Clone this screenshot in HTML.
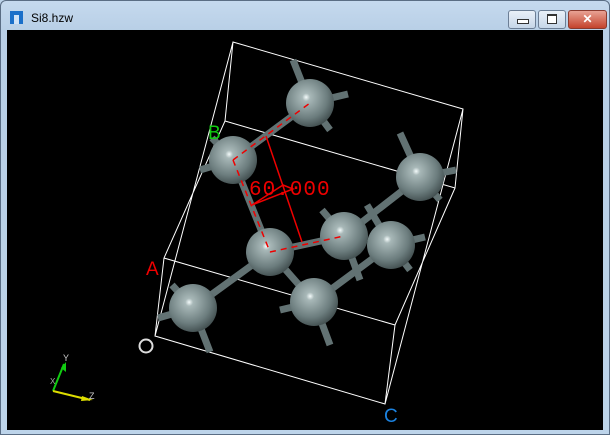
<!DOCTYPE html>
<html><head><style>
html,body{margin:0;padding:0;width:610px;height:434px;overflow:hidden;background:#bcd3ea;font-family:"Liberation Sans",sans-serif}
.win{position:absolute;left:0;top:0;width:608px;height:433px;border:1px solid #5a6d84;border-radius:6px 6px 0 0;background:linear-gradient(#c5d9ee,#b8cfe6 30px,#bdd4ea)}
.title{position:absolute;left:30px;top:10px;font-size:12px;color:#000}
.icon{position:absolute;left:9px;top:10px;width:13px;height:13px;background:#1a6fc9}
.icon:after{content:"";position:absolute;left:4px;top:4px;width:5px;height:9px;background:#cfe2f7}
.btn{position:absolute;top:9px;height:17px;border:1px solid #6c7e95;border-radius:3px;background:linear-gradient(#e9f0f8,#c6d6e8)}
</style></head><body>
<div class="win">
<div class="icon"></div><div class="title">Si8.hzw</div>
<div class="btn" style="left:507px;width:26px"><div style="position:absolute;left:8px;top:8px;width:10px;height:3px;border:1px solid #333;background:#fff"></div></div>
<div class="btn" style="left:537px;width:26px"><div style="position:absolute;left:8px;top:3px;width:8px;height:7px;border:1px solid #333;border-top-width:2px;background:#fff"></div></div>
<div class="btn" style="left:567px;width:37px;background:linear-gradient(#e8a294,#c4432c);border-color:#8a3a2e;color:#fff;font-weight:bold;font-size:12px;text-align:center;line-height:17px">✕</div>
</div>
<svg style="position:absolute;left:0;top:0" width="610" height="434">
<defs><radialGradient id="g" cx="0.42" cy="0.38" r="0.68"><stop offset="0" stop-color="#f4fbfb"/><stop offset="0.12" stop-color="#a8b8b8"/><stop offset="0.65" stop-color="#6c7d7e"/><stop offset="1" stop-color="#3a4647"/></radialGradient></defs>
<rect x="7" y="30" width="596" height="400" fill="#000"/>
<g stroke="#fff" stroke-width="1" fill="none">
<path d="M233 42L463 109L455 188L225 121ZM233 42L155 336L385 404L463 109M225 121L164 258L395 325L455 188M155 336L164 258M385 404L395 325"/>
</g>
<g stroke="#627273" stroke-width="7" stroke-linecap="butt">
<path d="M233 160L310 103M233 160L270 252M270 252L344 236M270 252L193 308M270 252L314 302M314 302L391 245M344 236L420 177M310 103L293 60M310 103L348 94M310 103L330 130M233 160L212 138M233 160L200 170M193 308L172 285M193 308L158 318M193 308L210 352M314 302L280 310M314 302L330 345M344 236L322 210M391 245L367 205M391 245L425 237M391 245L410 270M420 177L400 133M420 177L456 170M420 177L440 200M344 236L360 280"/>
</g>
<g fill="url(#g)">
<circle cx="310" cy="103" r="24"/><circle cx="233" cy="160" r="24"/><circle cx="420" cy="177" r="24"/>
<circle cx="391" cy="245" r="24"/><circle cx="344" cy="236" r="24"/><circle cx="270" cy="252" r="24"/>
<circle cx="314" cy="302" r="24"/><circle cx="193" cy="308" r="24"/>
</g>
<g stroke="#e00" stroke-width="1.5" fill="none">
<path d="M233 160L310 103" stroke-dasharray="6 5"/><path d="M233 160L270 252" stroke-dasharray="6 5"/><path d="M270 252L344 236" stroke-dasharray="6 5"/>
<path d="M266 136L302 242M252 205L293 189L283 185L252 205"/>
</g>
<text x="249" y="195" fill="#e00" font-size="21" font-family="Liberation Mono,monospace" letter-spacing="1">60.000</text>
<text x="146" y="275" fill="#e00" font-size="19">A</text>
<text x="208" y="139" fill="#1c1" font-size="19">B</text>
<text x="384" y="422" fill="#1b82e0" font-size="19">C</text>
<circle cx="146" cy="346" r="6.5" stroke="#ddd" stroke-width="2" fill="none"/>
<path d="M53 391L64 364" stroke="#1c1" stroke-width="2"/><path d="M61 368L66 362L66 372Z" fill="#1c1"/>
<path d="M53 391L90 400" stroke="#dd0" stroke-width="2"/><path d="M82 396L93 400L81 401Z" fill="#dd0"/>
<text x="63" y="361" fill="#ccc" font-size="9">Y</text><text x="89" y="399" fill="#ccc" font-size="9">Z</text>
<text x="50" y="384" fill="#aaa" font-size="8">X</text>
</svg>
</body></html>
